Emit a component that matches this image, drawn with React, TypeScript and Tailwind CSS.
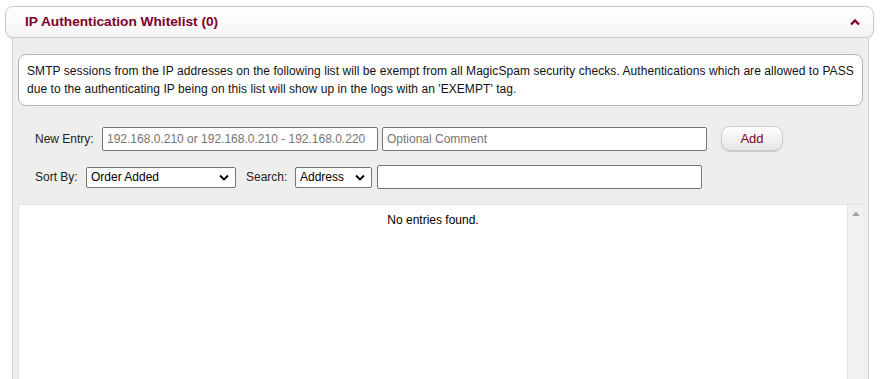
import React from "react";

const font = { fontFamily: '"Liberation Sans", Arial, sans-serif' };

const SelectBox: React.FC<{ value: string; className: string }> = ({ value, className }) => (
  <div
    className={`flex items-center justify-between bg-white border border-[#767676] rounded-[2px] pl-[4px] pr-[6px] text-[12px] text-black ${className}`}
  >
    <span>{value}</span>
    <svg width="10" height="7" viewBox="0 0 10 7">
      <polyline points="1,1.5 5,5.5 9,1.5" fill="none" stroke="#000" strokeWidth="1.8" />
    </svg>
  </div>
);

const App: React.FC = () => {
  return (
    <div className="w-[881px] h-[379px] overflow-hidden bg-white pt-[6px]" style={font}>
      {/* Header */}
      <div className="ml-[5px] w-[869px] h-[32px] rounded-[8px] border border-[#c9c9c9] bg-gradient-to-b from-white to-[#f4f4f4] flex items-center justify-between pl-[19px] pr-[12px] shadow-[0_1px_1px_rgba(0,0,0,0.08)]">
        <span className="text-[13.7px] font-bold text-[#800029]">IP Authentication Whitelist (0)</span>
        <svg width="12" height="8" viewBox="0 0 12 8">
          <polyline points="2,6.5 6,2.5 10,6.5" fill="none" stroke="#800029" strokeWidth="2.4" />
        </svg>
      </div>

      {/* Panel */}
      <div className="ml-[12px] w-[857px] h-[400px] bg-[#eeeeee] border-x border-[#cfcfcf] pt-[16px]">
        <div className="mx-[5px] h-[52px] rounded-[8px] border border-[#b5b5b5] bg-white px-[8px] pt-[7px] text-[12px] leading-[18px] tracking-[0.065px] text-[#111]">
          SMTP sessions from the IP addresses on the following list will be exempt from all MagicSpam security checks. Authentications which are allowed to PASS
          due to the authenticating IP being on this list will show up in the logs with an 'EXEMPT' tag.
        </div>

        {/* New entry row */}
        <div className="flex items-center mt-[20px] pl-[22px] h-[25px] text-[12px]">
          <span className="text-[#222] w-[67px]">New Entry:</span>
          <div className="w-[276px] h-[24px] border border-[#767676] rounded-[2px] bg-white flex items-center pl-[4px] text-[#757575]">
            192.168.0.210 or 192.168.0.210 - 192.168.0.220
          </div>
          <div className="ml-[4px] w-[325px] h-[24px] border border-[#767676] rounded-[2px] bg-white flex items-center pl-[4px] text-[#757575]">
            Optional Comment
          </div>
          <div className="ml-[14px] w-[62px] h-[25px] rounded-[9px] border border-[#cccccc] bg-gradient-to-b from-white to-[#e6e6e6] flex items-center justify-center text-[13px] text-[#800029] shadow-[0_1px_1px_rgba(0,0,0,0.15)]">
            Add
          </div>
        </div>

        {/* Sort row */}
        <div className="flex items-center mt-[14px] pl-[22px] h-[24px] text-[12px]">
          <span className="text-[#222] w-[51px]">Sort By:</span>
          <SelectBox value="Order Added" className="w-[150px] h-[21px]" />
          <span className="text-[#222] ml-[10px] w-[49px]">Search:</span>
          <SelectBox value="Address" className="w-[77px] h-[21px]" />
          <div className="ml-[5px] w-[325px] h-[24px] border border-[#767676] rounded-[2px] bg-white" />
        </div>

        {/* List */}
        <div className="mt-[15px] ml-[5px] w-[845px] h-[200px] bg-white border-t border-l border-[#e2e2e2] flex">
          <div className="flex-1 text-center text-[12px] text-black pt-[6px]">No entries found.</div>
          <div className="w-[16px] bg-[#f1f1f1] border-l border-[#e6e6e6] flex justify-center pt-[6px]">
            <svg width="8" height="5" viewBox="0 0 8 5">
              <polygon points="0,5 4,0.5 8,5" fill="#a3a3a3" />
            </svg>
          </div>
        </div>
      </div>
    </div>
  );
};

export default App;
